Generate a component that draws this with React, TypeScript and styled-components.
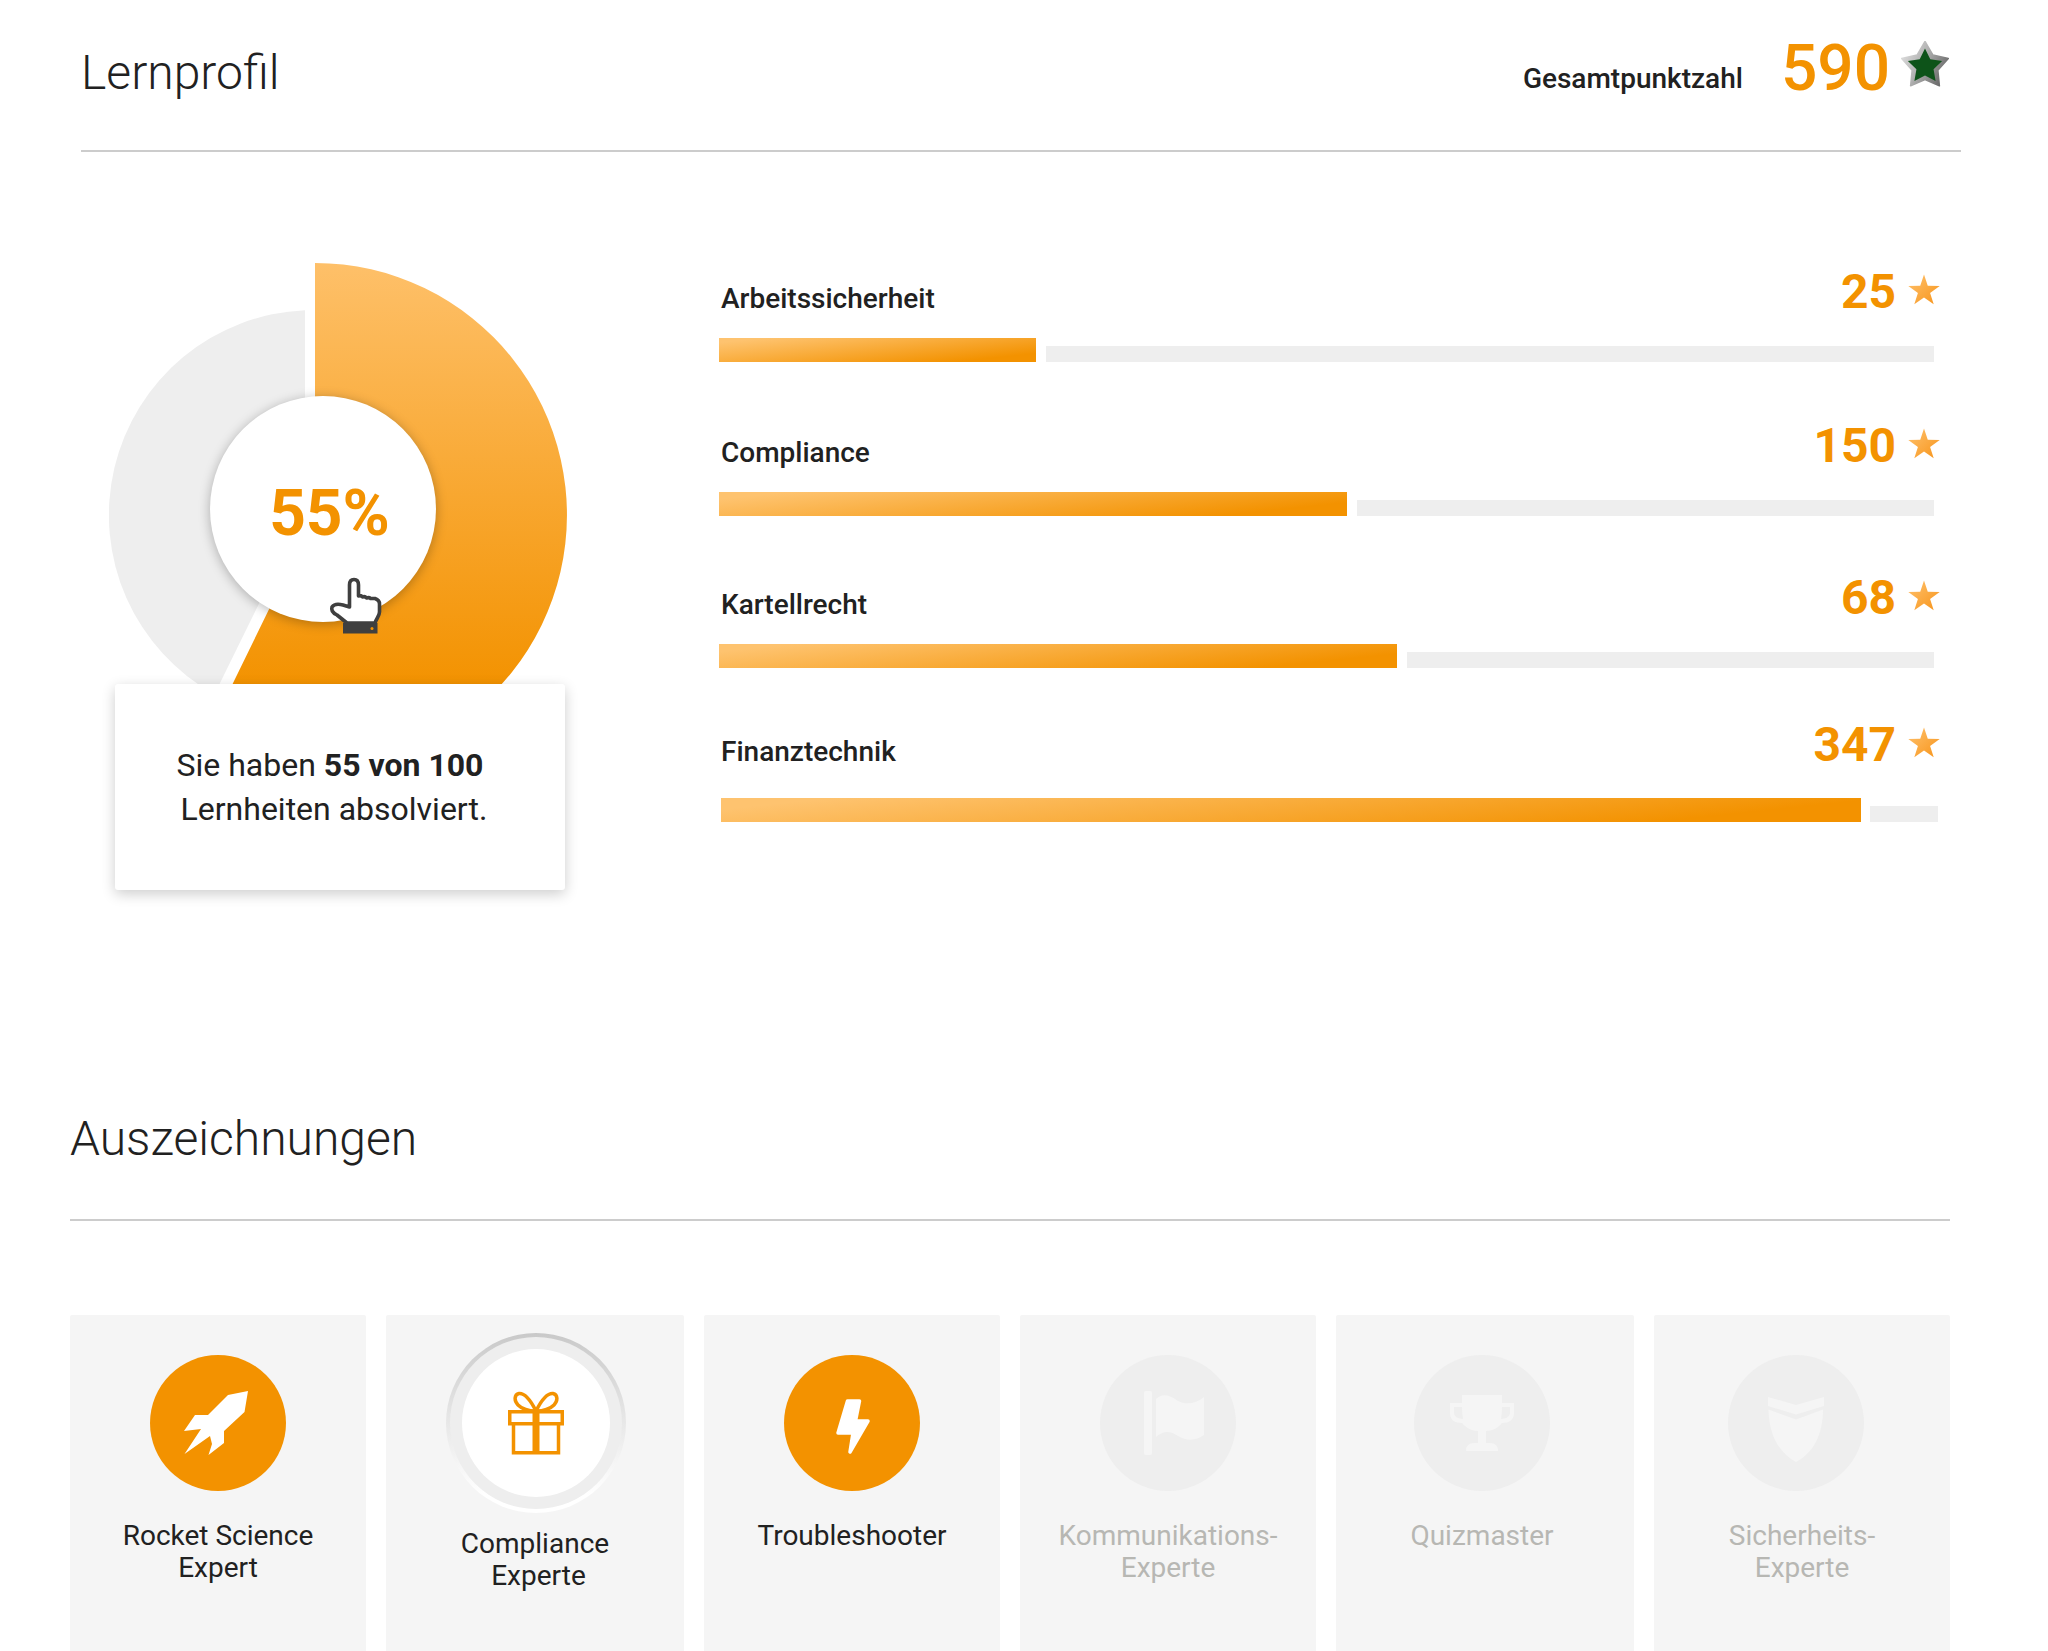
import React from "react";
import styled, { createGlobalStyle } from "styled-components";

const ORANGE = "#f39200";
const INK = "#212121";

const Global = createGlobalStyle`
  html, body { margin: 0; padding: 0; background: #fff; }
  body { font-family: Roboto, "Liberation Sans", sans-serif; color: ${INK}; }
  * { box-sizing: border-box; }
`;

const Page = styled.div`
  width: 2048px;
  height: 1651px;
  overflow: hidden;
  background: #fff;
`;

const ProfileSection = styled.section`
  width: 1880px;
  margin-left: 81px;
`;

const ProfileHeader = styled.header`
  height: 152px;
  border-bottom: 2px solid #ccc;
  display: flex;
  justify-content: space-between;
  align-items: flex-start;
  padding-right: 12px;
`;

const PageTitle = styled.h1`
  margin: 45px 0 0;
  font-size: 48px;
  line-height: 56px;
  font-weight: 300;
  color: ${INK};
`;

const TotalBox = styled.div`
  display: flex;
  align-items: flex-start;
`;

const TotalLabel = styled.span`
  font-size: 28px;
  line-height: 32px;
  font-weight: 500;
  margin: 63px 38px 0 0;
`;

const TotalValue = styled.span`
  font-size: 64px;
  line-height: 56px;
  font-weight: 500;
  color: ${ORANGE};
  margin: 41px 11px 0 0;
`;

const TotalStar = styled.svg`
  width: 48px;
  height: 48px;
  margin-top: 41px;
`;

const ProfileBody = styled.div`
  display: flex;
  align-items: flex-start;
`;

const DonutArea = styled.div`
  position: relative;
  width: 637px;
  height: 738px;
  flex: none;
`;

const DonutChart = styled.svg`
  display: block;
  width: 458px;
  height: 538px;
  margin: 111px 0 0 28px;
`;

const DonutHole = styled.div`
  position: absolute;
  left: 129px;
  top: 244px;
  width: 226px;
  height: 226px;
  border-radius: 50%;
  background: #fff;
  box-shadow: 0 2px 12px rgba(0, 0, 0, 0.28);
  display: flex;
  align-items: center;
  justify-content: center;
  padding: 8px 0 0 13px;
`;

const DonutPercent = styled.span`
  font-size: 64px;
  font-weight: 700;
  color: ${ORANGE};
`;

const HandCursor = styled.svg`
  position: absolute;
  left: 246px;
  top: 424px;
  width: 56px;
  height: 60px;
`;

const SummaryCard = styled.div`
  position: absolute;
  left: 34px;
  top: 532px;
  width: 450px;
  height: 206px;
  background: #fff;
  border-radius: 3px;
  box-shadow: 0 4px 14px rgba(0, 0, 0, 0.2);
  padding: 59px 20px 0 0;
  text-align: center;
  font-size: 32px;
  line-height: 44px;
  color: ${INK};
`;

const TopicList = styled.div`
  width: 1222px;
  padding-top: 112px;
  flex: none;
`;

const TopicRow = styled.div<{ $top: number }>`
  margin-top: ${(p) => p.$top}px;
`;

const TopicHead = styled.div`
  display: flex;
  align-items: baseline;
  padding-left: 3px;
  height: 74px;
`;

const TopicName = styled.span`
  font-size: 28px;
  font-weight: 500;
  flex: 1;
`;

const TopicPoints = styled.span`
  font-size: 48px;
  line-height: 56px;
  font-weight: 700;
  color: ${ORANGE};
  margin-right: 12px;
`;

const TopicStar = styled.svg`
  width: 32px;
  height: 32px;
  align-self: flex-start;
  margin-top: 10px;
`;

const TopicBar = styled.div<{ $left: number; $right: number; $top: number; $gap: number }>`
  display: flex;
  align-items: flex-end;
  gap: ${(p) => p.$gap}px;
  height: 24px;
  margin: ${(p) => p.$top}px ${(p) => p.$right}px 0 ${(p) => p.$left}px;
`;

const TopicFill = styled.div`
  height: 24px;
  flex: none;
  background: linear-gradient(174deg, #fec36f 8%, #f39200 85%);
`;

const TopicTrack = styled.div`
  height: 16px;
  flex: 1;
  background: #eee;
`;

const AwardSection = styled.section`
  width: 1880px;
  margin-left: 70px;
  margin-top: 181px;
`;

const AwardHeader = styled.header`
  height: 150px;
  border-bottom: 2px solid #ccc;
  padding-top: 40px;
`;

const SectionTitle = styled.h2`
  margin: 0;
  font-size: 48px;
  line-height: 56px;
  font-weight: 300;
`;

const AwardGrid = styled.div`
  display: grid;
  grid-template-columns: 296px 298px 296px 296px 298px 296px;
  gap: 20px;
  margin-top: 94px;
`;

const AwardCard = styled.div<{ $shift: number }>`
  height: 420px;
  background: #f5f5f5;
  border-radius: 2px;
  display: flex;
  flex-direction: column;
  align-items: center;
  padding: 40px ${(p) => p.$shift}px 0 0;
`;

const BadgeDisc = styled.div<{ $off?: boolean; $nudge?: number }>`
  width: 136px;
  height: 136px;
  flex: none;
  border-radius: 50%;
  background: ${(p) => (p.$off ? "#eee" : ORANGE)};
  margin-right: ${(p) => p.$nudge ?? 0}px;
  svg {
    display: block;
    width: 136px;
    height: 136px;
  }
`;

const BadgeRing = styled.div`
  width: 180px;
  height: 180px;
  flex: none;
  margin-top: -22px;
  margin-left: 2px;
  border-radius: 50%;
  padding: 4px;
  background: linear-gradient(180deg, #c9c9c9 0%, #e2e2e2 40%, #fff 90%);
  display: flex;
`;

const RingBand = styled.div`
  flex: 1;
  border-radius: 50%;
  background: #eee;
  padding: 12px;
  display: flex;
`;

const RingCore = styled.div`
  flex: 1;
  border-radius: 50%;
  background: #fff;
  display: flex;
  align-items: center;
  justify-content: center;
  svg {
    display: block;
    width: 56px;
    height: 64px;
  }
`;

const AwardName = styled.div<{ $off?: boolean; $gap: number }>`
  margin-top: ${(p) => p.$gap}px;
  font-size: 28px;
  line-height: 32px;
  text-align: center;
  color: ${(p) => (p.$off ? "#b7b7b3" : INK)};
`;

function starPoints(cx: number, cy: number, R: number, r: number) {
  const pts: string[] = [];
  for (let i = 0; i < 10; i++) {
    const a = (Math.PI / 5) * i;
    const rad = i % 2 === 0 ? R : r;
    pts.push(`${(cx + rad * Math.sin(a)).toFixed(2)},${(cy - rad * Math.cos(a)).toFixed(2)}`);
  }
  return pts.join(" ");
}

const topics = [
  { name: "Arbeitssicherheit", points: 25, fill: 317, top: 0, left: 0.5, right: 6, barTop: 0, gap: 10 },
  { name: "Compliance", points: 150, fill: 628, top: 56, left: 0.5, right: 6, barTop: 0, gap: 10 },
  { name: "Kartellrecht", points: 68, fill: 678.5, top: 54, left: 0.5, right: 6, barTop: 0, gap: 10 },
  { name: "Finanztechnik", points: 347, fill: 1140, top: 49, left: 3, right: 2, barTop: 7, gap: 9 },
];

const OrangeStar = ({ id }: { id: string }) => (
  <TopicStar viewBox="0 0 32 32">
    <defs>
      <linearGradient id={id} x1="0" y1="0" x2="1" y2="1">
        <stop offset="0" stopColor="#ffc26e" />
        <stop offset="1" stopColor="#f7941a" />
      </linearGradient>
    </defs>
    <polygon points={starPoints(16, 17, 16.5, 6.4)} fill={`url(#${id})`} />
  </TopicStar>
);

const RocketIcon = () => (
  <svg viewBox="0 0 136 136">
    <path
      fill="#fff"
      d="M98 36 L78 40 L58 60 L45 60 L34 76 L51 74 L34.500 99 L60 81 L62 89 L58.500 100 L74 88 L74 76 L94.500 57 Z"
    />
  </svg>
);

const GiftIcon = () => (
  <svg viewBox="0 0 56 64" fill="none" stroke={ORANGE} strokeWidth="3.500">
    <rect x="1.750" y="20.750" width="52.500" height="12" />
    <path d="M5.500 32 V61.750 H50.500 V32" />
    <path d="M28 20 V62" strokeWidth="7" />
    <path d="M28 20 C22 8 16 2 11 2.500 C6 3.500 6 10 10 14 C14 18 20 20 28 20 Z" />
    <path d="M28 20 C34 8 40 2 45 2.500 C50 3.500 50 10 46 14 C42 18 36 20 28 20 Z" />
  </svg>
);

const BoltIcon = () => (
  <svg viewBox="0 0 136 136">
    <path
      d="M63.500 46 H75.500 L71.500 66 H84 L66 97 L69 78 H54 Z"
      fill="#fff"
      stroke="#fff"
      strokeWidth="3.500"
      strokeLinejoin="round"
    />
  </svg>
);

const FlagIcon = () => (
  <svg viewBox="0 0 136 136" fill="#f5f5f5">
    <rect x="44" y="36" width="8" height="64" rx="2" />
    <path d="M56 44 C64 37 71 41 78 46 C86 50 96 49 104 42 V80 C96 86 86 86 78 81 C70 76 64 75 56 82 Z" />
  </svg>
);

const TrophyIcon = () => (
  <svg viewBox="0 0 136 136">
    <path
      fill="#f5f5f5"
      fillRule="evenodd"
      d="M48 40 H88 V48 H100 V58 C100 65 95 68 88 68 C84 73 78 76 72 76 V88 H76 Q84 88 84 96 H52 Q52 88 60 88 H64 V76 C58 76 52 73 48 68 C41 68 36 65 36 58 V48 H48 Z M40 52 V58 C40 61 44 64 49 64 Q48 58 48 52 Z M96 52 V58 C96 61 92 64 87 64 Q88 58 88 52 Z"
    />
  </svg>
);

const ShieldIcon = () => (
  <svg viewBox="0 0 136 136" fill="#f5f5f5">
    <path d="M40 42 L68 50 L96 42 V51 L68 59.500 L40 51 Z" />
    <path d="M40.500 54.500 L68 64.500 L95 54.500 C95 80 85 98 68 107 C51 98 41 80 40.500 54.500 Z" />
  </svg>
);

const nb = "\u00A0";

export default function App() {
  return (
    <Page>
      <Global />
      <ProfileSection>
        <ProfileHeader>
          <PageTitle>Lernprofil</PageTitle>
          <TotalBox>
            <TotalLabel>Gesamtpunktzahl</TotalLabel>
            <TotalValue>590</TotalValue>
            <TotalStar viewBox="0 0 48 48">
              <defs>
                <linearGradient id="silver" x1="0" y1="0" x2="1" y2="0.500">
                  <stop offset="0" stopColor="#e8e8e8" />
                  <stop offset="0.500" stopColor="#b4b4b4" />
                  <stop offset="1" stopColor="#6f6f6f" />
                </linearGradient>
              </defs>
              <polygon
                points={starPoints(24, 25, 24.5, 13.5)}
                fill="url(#silver)"
                stroke="url(#silver)"
                strokeWidth="1.500"
                strokeLinejoin="round"
              />
              <polygon points={starPoints(24, 25.500, 18, 9)} fill="#0d5319" />
            </TotalStar>
          </TotalBox>
        </ProfileHeader>
        <ProfileBody>
          <DonutArea>
            <DonutChart viewBox="109 263 458 538">
              <defs>
                <linearGradient id="wedge" gradientUnits="userSpaceOnUse" x1="0" y1="263" x2="0" y2="690">
                  <stop offset="0" stopColor="#fec069" />
                  <stop offset="1" stopColor="#f39200" />
                </linearGradient>
              </defs>
              <path d="M305 510 V310.200 A205 205 0 0 0 214.500 694.300 Z" fill="#eee" />
              <path d="M315 263 A252 252 0 1 1 204.500 741.500 L315 515 Z" fill="url(#wedge)" />
            </DonutChart>
            <DonutHole>
              <DonutPercent>55%</DonutPercent>
            </DonutHole>
            <HandCursor viewBox="28 16 56 60">
              <path
                d="M48 63 L38 55 C34 53 32 50 33 47 C35 44 40 44 44 45 L50.500 47 V25 C50.500 21 52 19.500 55 19.500 C58 19.500 59.500 21 59.500 25 V36 Q62 35 63.500 37 Q66 36 67.500 38 Q70 37 71.500 38.500 L76 38.500 C79 39.500 80.500 41 80.500 44 V52 C80.500 56 77 59 76 63 Z"
                fill="#fff"
                stroke="#3f3f3f"
                strokeWidth="3.600"
                strokeLinejoin="round"
              />
              <rect x="44" y="63" width="34.500" height="10.500" fill="#3f3f3f" />
              <circle cx="73" cy="68.500" r="1.500" fill={ORANGE} />
            </HandCursor>
            <SummaryCard>
              Sie haben <b>55 von 100</b>
              <br />
              {nb}Lernheiten absolviert.
            </SummaryCard>
          </DonutArea>
          <TopicList>
            {topics.map((t) => (
              <TopicRow key={t.name} $top={t.top}>
                <TopicHead>
                  <TopicName>{t.name}</TopicName>
                  <TopicPoints>{t.points}</TopicPoints>
                  <OrangeStar id={`star-${t.points}`} />
                </TopicHead>
                <TopicBar $left={t.left} $right={t.right} $top={t.barTop} $gap={t.gap}>
                  <TopicFill style={{ width: t.fill }} />
                  <TopicTrack />
                </TopicBar>
              </TopicRow>
            ))}
          </TopicList>
        </ProfileBody>
      </ProfileSection>
      <AwardSection>
        <AwardHeader>
          <SectionTitle>Auszeichnungen</SectionTitle>
        </AwardHeader>
        <AwardGrid>
          <AwardCard $shift={0}>
            <BadgeDisc>
              <RocketIcon />
            </BadgeDisc>
            <AwardName $gap={29}>
              Rocket Science
              <br />
              Expert
            </AwardName>
          </AwardCard>
          <AwardCard $shift={0}>
            <BadgeRing>
              <RingBand>
                <RingCore>
                  <GiftIcon />
                </RingCore>
              </RingBand>
            </BadgeRing>
            <AwardName $gap={15}>
              Compliance
              <br />
              {nb}Experte
            </AwardName>
          </AwardCard>
          <AwardCard $shift={0}>
            <BadgeDisc>
              <BoltIcon />
            </BadgeDisc>
            <AwardName $gap={29}>Troubleshooter</AwardName>
          </AwardCard>
          <AwardCard $shift={0}>
            <BadgeDisc $off>
              <FlagIcon />
            </BadgeDisc>
            <AwardName $off $gap={29}>
              Kommunikations-
              <br />
              Experte
            </AwardName>
          </AwardCard>
          <AwardCard $shift={6}>
            <BadgeDisc $off>
              <TrophyIcon />
            </BadgeDisc>
            <AwardName $off $gap={29}>
              Quizmaster
            </AwardName>
          </AwardCard>
          <AwardCard $shift={0}>
            <BadgeDisc $off $nudge={12}>
              <ShieldIcon />
            </BadgeDisc>
            <AwardName $off $gap={29}>
              Sicherheits-
              <br />
              Experte
            </AwardName>
          </AwardCard>
        </AwardGrid>
      </AwardSection>
    </Page>
  );
}
